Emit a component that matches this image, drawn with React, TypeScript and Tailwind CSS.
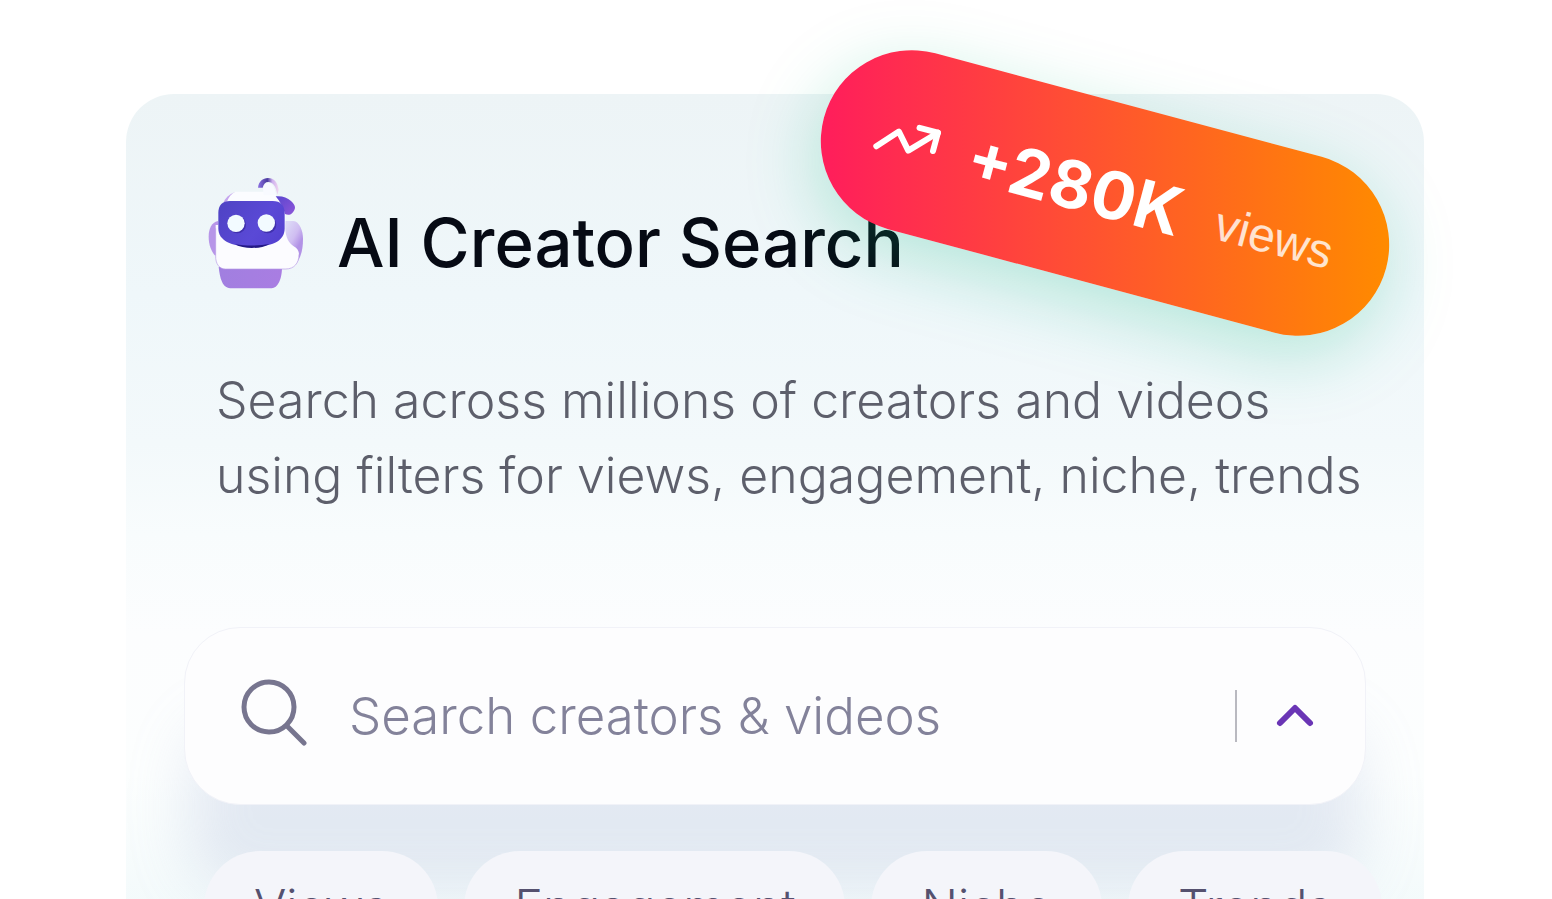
import React from 'react';

const filters = ['Views', 'Engagement', 'Niche', 'Trends'];

const RobotIcon = () => (
  <svg width="95" height="113" viewBox="54 33 285 339" fill="none" className="shrink-0" aria-hidden="true">
    <defs>
      <linearGradient id="face" x1="90" y1="110" x2="280" y2="240" gradientUnits="userSpaceOnUse">
        <stop stopColor="#4f43c4" />
        <stop offset="0.6" stopColor="#5a49d6" />
        <stop offset="1" stopColor="#5340cf" />
      </linearGradient>
      <linearGradient id="body" x1="90" y1="320" x2="270" y2="360" gradientUnits="userSpaceOnUse">
        <stop stopColor="#a17fe0" />
        <stop offset="1" stopColor="#a97de2" />
      </linearGradient>
      <linearGradient id="ear" x1="285" y1="190" x2="338" y2="220" gradientUnits="userSpaceOnUse">
        <stop stopColor="#dcd8f6" />
        <stop offset="0.6" stopColor="#cfbdf1" />
        <stop offset="1" stopColor="#b292e6" />
      </linearGradient>
      <linearGradient id="antenna" x1="205" y1="60" x2="265" y2="60" gradientUnits="userSpaceOnUse">
        <stop stopColor="#8a70e0" />
        <stop offset="0.45" stopColor="#4a3a9e" />
        <stop offset="0.7" stopColor="#cdb0ee" />
        <stop offset="1" stopColor="#f0d5f0" />
      </linearGradient>
      <linearGradient id="bolt" x1="262" y1="95" x2="312" y2="145" gradientUnits="userSpaceOnUse">
        <stop stopColor="#5c46cf" />
        <stop offset="1" stopColor="#8a55d8" />
      </linearGradient>
    </defs>
    <path d="M84 168C64 172 56 192 56 215c0 24 8 44 20 58l10-20z" fill="#b795e8" />
    <path d="M286 168h24c18 2 29 28 29 54 0 32-6 54-20 74l-34-60z" fill="url(#ear)" />
    <path d="M86 306h190c0 26-6 44-14 54-6 9-14 10-24 10H126c-14 0-24-6-30-20-6-12-8-28-10-44z" fill="url(#body)" />
    <path d="M101 112c4-12 18-26 36-31l-16 26z" fill="#c5a5ee" />
    <path d="M110 112c6-16 14-26 26-32h96c16 0 22 4 28 14 14 18 23 36 27 56l-4 64H86z" fill="#fbfcff" />
    <path d="M77 180h208c0 26 6 50 24 62 12 7 18 14 18 28 0 26-14 42-38 42H106c-18 0-30-16-29-40z" fill="#fcfcff" />
    <path d="M77 190v82c-1 24 11 40 29 40h181c26 0 40-18 40-44" stroke="#b79ae6" strokeWidth="2" />
    <path d="M204 68c2-18 14-29 30-29 18 0 29 12 32 36l-4 14c-4-26-14-38-27-38-9 0-14 6-17 17z" fill="url(#antenna)" />
    <path d="M219 72c3-14 9-20 17-19 12 2 19 18 23 38h-38z" fill="#f8faff" />
    <path d="M257 94c20-2 34 4 46 14 8 7 12 14 12 20 0 5-4 12-9 17-6 6-15 5-21 2-4-18-14-36-28-53z" fill="url(#bolt)" />
    <path d="M120 108h128c24 0 36 14 36 36v46c0 36-32 55-98 55-65 0-101-19-101-55v-46c0-24 12-36 35-36z" fill="url(#face)" />
    <path d="M136 238c30 5 72 5 102-1-14 9-32 12-52 12s-38-3-50-11z" fill="#241985" />
    <circle cx="142" cy="179" r="26" fill="#4030ad" />
    <circle cx="233" cy="179" r="26" fill="#4030ad" />
    <circle cx="138" cy="175" r="26" fill="#f2fbff" />
    <circle cx="229" cy="174" r="26" fill="#f2fbff" />
  </svg>
);

const TrendIcon = () => (
  <svg width="64" height="40" viewBox="0 0 64 40" fill="none" stroke="white" strokeWidth="6" strokeLinecap="round" strokeLinejoin="round" aria-hidden="true">
    <path d="M4 34 22 14 36 30 60 5" />
    <path d="M41 5h19v19" />
  </svg>
);

const SearchIcon = () => (
  <svg width="68" height="74" viewBox="0 0 68 74" fill="none" stroke="#77758f" strokeWidth="5" strokeLinecap="round" aria-hidden="true">
    <circle cx="30" cy="28" r="25" />
    <path d="m48 47 17 17" />
  </svg>
);

const ViewsBadge = () => (
  <div className="absolute right-7 top-2 flex h-[182px] w-[582px] rotate-15 items-center rounded-full bg-[linear-gradient(75deg,#ff1f5a_5%,#ff4f33_45%,#ff8a00_96%)] pl-[54px] shadow-[0_20px_70px_rgba(16,185,129,0.26)]">
    <TrendIcon />
    <span className="ml-8 text-[66px] font-bold leading-none text-white">+280K</span>
    <span className="ml-9 font-['Liberation_Sans',sans-serif] text-[48px] leading-none text-white/80">views</span>
  </div>
);

export default function App() {
  return (
    <main className="h-screen overflow-hidden bg-white pl-[126px] pr-32 pt-[94px] font-['Inter','Liberation_Sans',sans-serif]">
      <section className="relative min-h-[960px] rounded-t-[48px] bg-[linear-gradient(180deg,#edf4f6_0px,#eff7fa_200px,#f3f9fb_350px,#f8fcfd_440px,#fcfdfe_540px,#fcfefe_680px,#f3fafb_820px)] px-[58px] pt-[82px]">
        <div className="flex items-center gap-[34px] pl-6">
          <RobotIcon />
          <h1 className="pt-5 text-[67px] font-medium leading-none text-[#060a14]">AI Creator Search</h1>
        </div>

        <p className="mt-[74px] pl-8 text-[50px] font-light leading-[75px] text-[#5d5f6b]">
          Search across millions of creators and videos
          <br />
          using filters for views, engagement, niche, trends
        </p>

        <div className="mt-[114px] flex h-[178px] items-center rounded-[56px] border border-[#f1f2f8] bg-[#fdfdfe] pl-[54px] pr-10 shadow-[0_90px_60px_-6px_rgba(165,180,215,0.27)]">
          <label htmlFor="creator-search">
            <SearchIcon />
          </label>
          <input
            id="creator-search"
            type="text"
            aria-label="Search creators & videos"
            placeholder="Search creators & videos"
            className="ml-[42px] min-w-0 flex-1 bg-transparent text-[51px] font-light text-[#4b4a63] outline-none placeholder:text-[#83829a]"
          />
          <span className="h-[52px] w-[2px] bg-[#b9b9c0]" />
          <button type="button" aria-label="Hide filters" className="ml-7 p-2">
            <svg width="44" height="28" viewBox="0 0 44 28" fill="none" stroke="#6a35b5" strokeWidth="6" strokeLinecap="round" strokeLinejoin="round">
              <path d="M7 21 22 6l15 15" />
            </svg>
          </button>
        </div>

        <div className="-mr-4 ml-5 mt-[46px] flex gap-[26px]">
          {filters.map((name) => (
            <button key={name} type="button" className="h-28 shrink-0 rounded-full bg-[#f4f5fa] px-[50px] text-[48px] font-light leading-none text-[#55516f]">
              {name}
            </button>
          ))}
        </div>

        <ViewsBadge />
      </section>
    </main>
  );
}
